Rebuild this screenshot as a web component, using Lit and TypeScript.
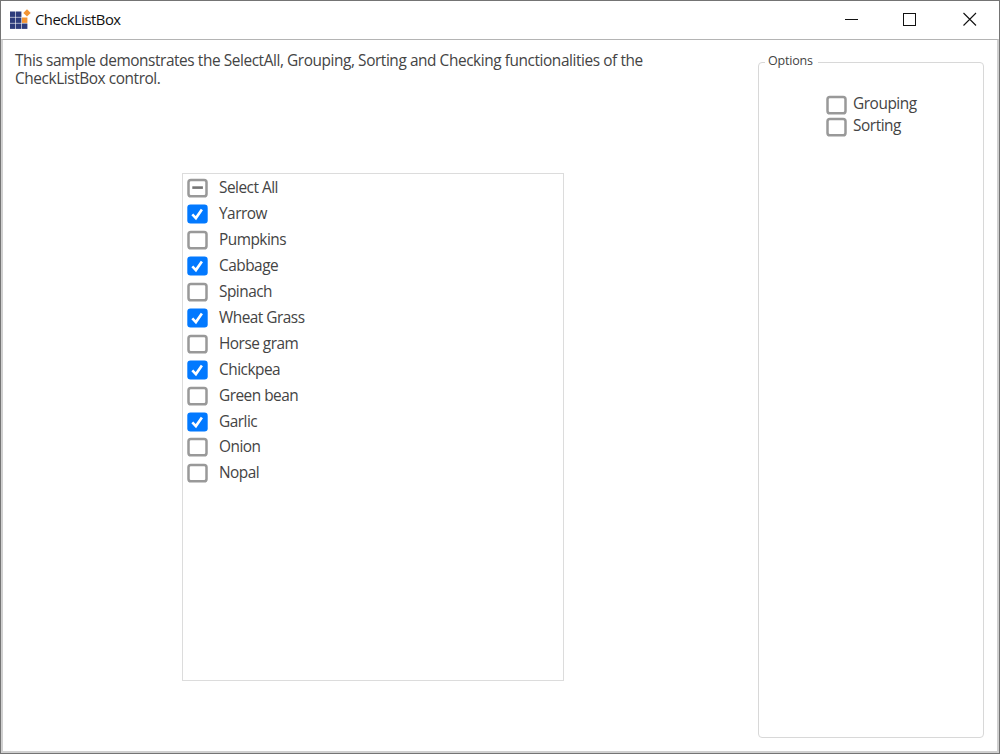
import { LitElement, html, svg, css } from "lit";
import { customElement, property, state } from "lit/decorators.js";

type Mark = "on" | "off" | "mixed";

@customElement("check-mark")
class CheckMark extends LitElement {
  @property() mark: Mark = "off";

  static styles = css`
    :host { display: block; width: 21px; height: 20px; flex: none; }
    svg { display: block; }
  `;

  render() {
    return html`<svg width="21" height="20" viewBox="0 0 21 20" fill="none">
      ${this.mark === "on"
        ? svg`<rect x="0.3" y="0.5" width="20.4" height="19" rx="3.2" fill="#0279ff"/>
              <path d="M5.3 10.4l3.6 3.7 6-8.7" stroke="#fff" stroke-width="2.6"/>`
        : svg`<rect x="1.5" y="1.9" width="18" height="16.4" rx="2.4" fill="#fff" stroke="#999" stroke-width="2.5"/>`}
      ${this.mark === "mixed" ? svg`<path d="M5.3 9.6h10.6" stroke="#757575" stroke-width="2.6"/>` : null}
    </svg>`;
  }
}

@customElement("app-root")
class AppRoot extends LitElement {
  @state() private items: [string, Mark][] = [
    ["Select All", "mixed"],
    ["Yarrow", "on"],
    ["Pumpkins", "off"],
    ["Cabbage", "on"],
    ["Spinach", "off"],
    ["Wheat Grass", "on"],
    ["Horse gram", "off"],
    ["Chickpea", "on"],
    ["Green bean", "off"],
    ["Garlic", "on"],
    ["Onion", "off"],
    ["Nopal", "off"],
  ];
  @state() private options = ["Grouping", "Sorting"];

  static styles = css`
    :host {
      display: block; width: 1000px; height: 754px; overflow: hidden;
      font-family: "Open Sans", "Noto Sans", sans-serif; font-size: 15.4px; color: #444;
    }
    * { box-sizing: border-box; }
    .window {
      display: flex; flex-direction: column; height: 754px;
      background: #fff; border: 1px solid #747474;
    }
    .titlebar { display: flex; align-items: center; height: 38px; padding-left: 8px; flex: none; }
    .logo { display: block; margin-right: 4px; }
    .title { flex: 1; font-size: 14.8px; color: #111; letter-spacing: -0.5px; padding-bottom: 2px; }
    .controls { display: block; }
    .client {
      flex: 1; display: flex; min-height: 0;
      border: 2px solid #d0d0d0; border-top: 1px solid #b4b4b4;
    }
    .main { width: 755px; display: flex; flex-direction: column; }
    .intro { margin: 12px 0 0 12px; width: 650px; height: 36px; line-height: 18px; letter-spacing: -0.42px; white-space: nowrap; }
    .list { margin: 85px 0 0 179px; width: 382px; height: 508px; border: 1px solid #dcdcdc; padding: 1.3px 0 0 4px; }
    .row { display: flex; align-items: center; height: 25.93px; gap: 11px; }
    .label { line-height: 20px; white-space: nowrap; letter-spacing: -0.5px; }
    .panel {
      width: 226px; height: 686px; margin: 12px 0 0 0; padding: 0;
      border: 1px solid #d8d8d8; border-radius: 4px;
    }
    .legend { margin-left: 6px; padding: 0 5px 3px 3px; font-size: 12.5px; line-height: 18px; letter-spacing: -0.2px; }
    .options { padding: 21px 0 0 67px; }
    .option { display: flex; align-items: center; height: 22px; gap: 6px; }
    .option .label { padding-bottom: 2px; letter-spacing: -0.45px; }
  `;

  render() {
    return html`<div class="window">
      <div class="titlebar">
        <svg class="logo" width="22" height="22" viewBox="0 0 22 22">
          <g fill="#2d3c7c">
            <rect x="1" y="2.5" width="5.4" height="5.4"/><rect x="7" y="2.5" width="5.4" height="5.4"/>
            <rect x="1" y="8.5" width="5.4" height="5.4"/><rect x="7" y="8.5" width="5.4" height="5.4"/>
            <rect x="1" y="14.5" width="5.4" height="5.4"/><rect x="7" y="14.5" width="5.4" height="5.4"/>
            <rect x="13" y="14.5" width="5.4" height="5.4"/>
          </g>
          <rect x="13" y="8.5" width="5.4" height="5.4" fill="#f39433"/>
          <path d="M18 0.2l3.7 3.7-3.7 3.7-3.7-3.7z" fill="#f39433"/>
        </svg>
        <span class="title">CheckListBox</span>
        <svg class="controls" width="170" height="38" viewBox="829 1 170 38" fill="none">
          <path d="M845 19.5h13" stroke="#111"/>
          <rect x="903.5" y="13.5" width="12" height="12" stroke="#111"/>
          <path d="M963.5 13l12.5 12.5M976 13l-12.5 12.5" stroke="#111" stroke-width="1.1"/>
        </svg>
      </div>
      <div class="client">
        <div class="main">
          <div class="intro">This sample demonstrates the SelectAll, Grouping, Sorting and Checking functionalities of the<br>CheckListBox control.</div>
          <div class="list">
            ${this.items.map(([name, mark]) => html`<div class="row"><check-mark .mark=${mark}></check-mark><span class="label">${name}</span></div>`)}
          </div>
        </div>
        <fieldset class="panel">
          <legend class="legend">Options</legend>
          <div class="options">
            ${this.options.map((name) => html`<div class="option"><check-mark></check-mark><span class="label">${name}</span></div>`)}
          </div>
        </fieldset>
      </div>
    </div>`;
  }
}
